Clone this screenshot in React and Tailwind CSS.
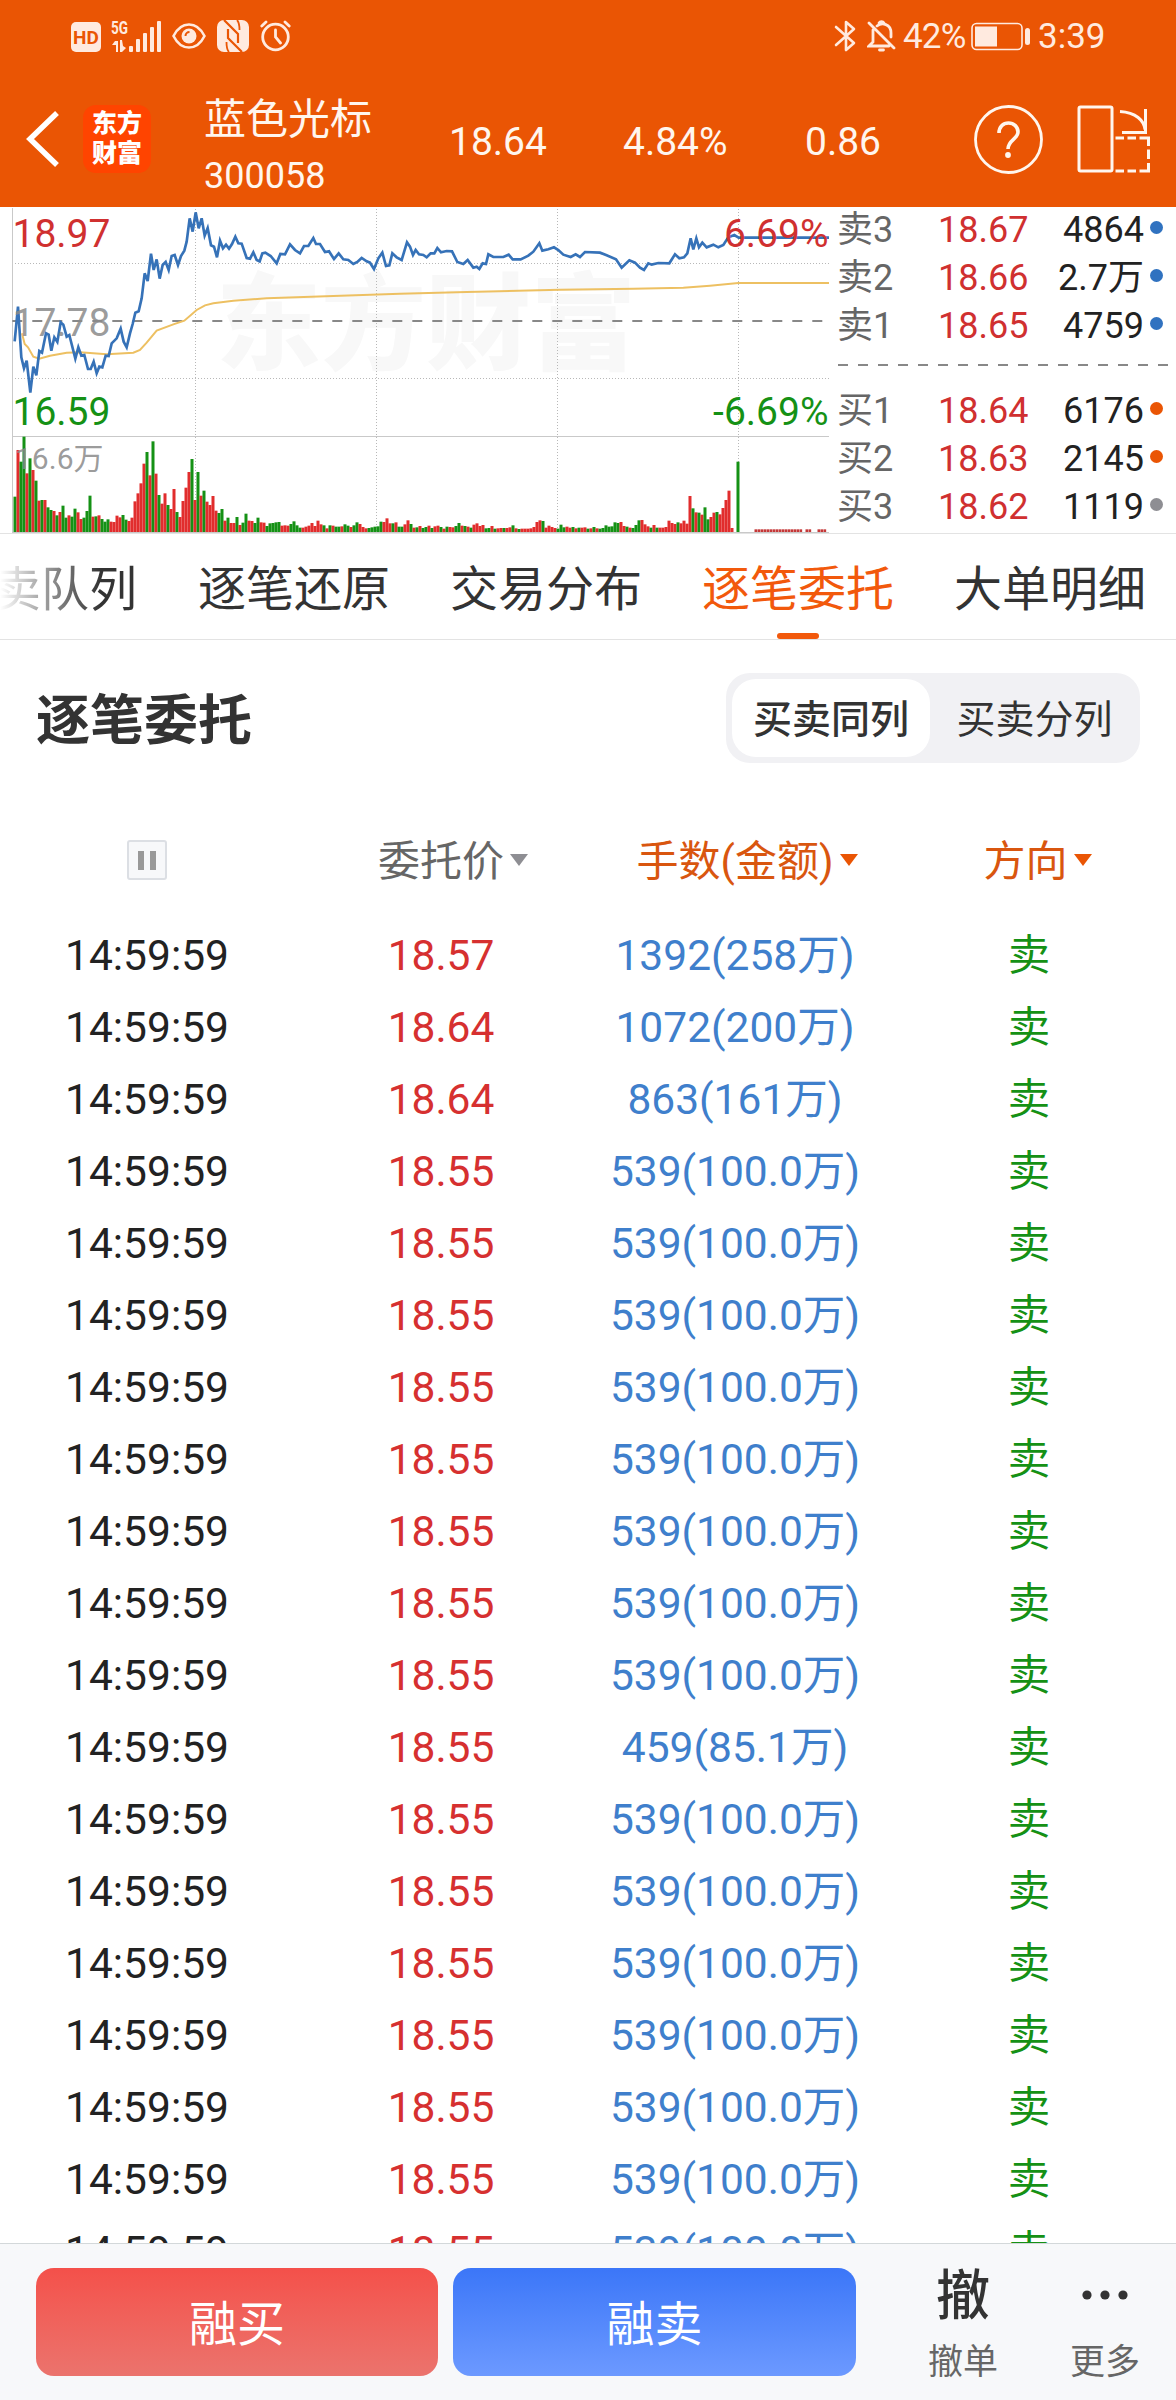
import clsx from "clsx";

const asks = [
  { label: "卖3", price: "18.67", amount: "4864", dot: "bg-[#3072c0]" },
  { label: "卖2", price: "18.66", amount: "2.7万", dot: "bg-[#3072c0]" },
  { label: "卖1", price: "18.65", amount: "4759", dot: "bg-[#3072c0]" },
];

const bids = [
  { label: "买1", price: "18.64", amount: "6176", dot: "bg-[#ea5504]" },
  { label: "买2", price: "18.63", amount: "2145", dot: "bg-[#ea5504]" },
  { label: "买3", price: "18.62", amount: "1119", dot: "bg-[#8e8e93]" },
];

const tabs = ["卖队列", "逐笔还原", "交易分布", "逐笔委托", "大单明细"];

const sell = (price, amount) => ({ time: "14:59:59", price, amount, side: "卖" });

const orders = [
  sell("18.57", "1392(258万)"),
  sell("18.64", "1072(200万)"),
  sell("18.64", "863(161万)"),
  ...Array.from({ length: 8 }, () => sell("18.55", "539(100.0万)")),
  sell("18.55", "459(85.1万)"),
  ...Array.from({ length: 7 }, () => sell("18.55", "539(100.0万)")),
];

// Chart data is in thirds of a pixel, x from the left edge of the screen
const priceLine =
  "44,424 54,320 64,472 72,505 80,482 91,578 100,500 109,526 118,453 126,458 138,400 146,404 154,452 163,412 172,426 182,367 190,374 200,410 208,405 226,476 235,442 244,467 253,465 264,507 272,507 281,485 290,520 298,500 307,502 317,467 326,468 335,430 350,415 362,386 371,425 380,442 390,400 398,372 406,338 416,334 425,295 434,220 443,243 453,161 461,210 470,178 479,236 488,195 497,186 506,210 515,168 524,165 534,195 543,168 553,152 560,125 569,55 578,95 587,37 596,85 605,55 614,107 623,84 633,136 642,140 651,172 660,122 669,145 678,134 687,146 696,132 706,110 715,130 725,131 740,174 750,176 760,157 770,180 779,184 787,160 796,158 812,168 830,190 841,162 855,163 870,133 885,150 900,160 912,138 925,138 940,114 948,132 960,132 975,156 987,154 1002,177 1016,160 1030,178 1045,180 1060,192 1072,186 1085,174 1100,184 1110,188 1122,207 1135,175 1147,158 1158,198 1168,196 1177,160 1190,172 1205,180 1221,127 1230,140 1239,165 1247,150 1257,163 1270,165 1280,172 1292,160 1303,160 1312,144 1323,157 1340,153 1356,154 1372,186 1390,192 1403,180 1420,203 1430,200 1438,207 1448,190 1458,192 1465,163 1480,171 1510,171 1526,164 1538,178 1562,178 1585,167 1600,155 1618,130 1627,152 1645,148 1662,142 1675,150 1690,164 1712,171 1727,163 1740,171 1755,156 1800,158 1820,166 1848,178 1865,203 1888,181 1905,188 1920,203 1932,210 1945,190 1955,194 1975,189 2008,190 2025,163 2038,175 2052,172 2062,160 2072,115 2080,148 2089,115 2097,142 2107,128 2120,142 2140,134 2155,142 2170,135 2185,112 2203,105 2216,113 2487,113";

const averageLine =
  "66,400 74,432 84,442 100,470 118,476 150,467 200,458 240,457 320,463 400,458 420,450 440,428 470,392 520,373 553,362 590,330 615,316 640,310 700,302 800,295 1000,288 1200,281 1400,276 1680,269 1900,266 2050,263 2130,257 2215,249 2487,249";

// Positive = red bar, negative = green bar
const volumes = [
  -106, 246, -211, -286, 176, -221, 186, -154, 94, -96, 96, -74, -66, 63, -50, 60, -79, -43, 50, -46,
  -70, 59, 39, -43, -63, -109, 46, -47, 50, -39, -31, -38, 31, 30, 49, 44, -51, -37, 33, 43,
  92, 116, 146, 205, -240, 170, -272, 175, -111, 85, 116, -81, 69, 129, -60, 45, 93, 133, 180, -219,
  96, -180, 109, -124, 91, 81, 108, 64, -57, -69, 34, -43, 27, 27, -45, 21, -28, -55, 34, 33,
  -27, -43, 29, 28, -18, -26, -27, -29, -30, 19, 20, 19, -24, -32, -20, -13, 13, 16, 19, 27,
  18, 34, 23, -20, 11, -20, 19, -16, -16, 17, -23, -19, 15, -20, -29, 24, 15, 11, -12, -14,
  -16, -17, -31, 30, 41, 26, -26, 29, -16, -16, 23, 35, -24, 13, -14, 18, -12, -15, 19, -12,
  17, 19, -15, 10, -16, 15, 14, -18, -27, 19, -18, 16, -13, 22, 26, 18, 21, -11, -12, 18,
  -10, 11, 12, -12, 12, 14, -20, 11, -9, 10, 10, 10, 11, 15, 30, 35, -33, 13, 19, 15,
  12, -10, -22, -14, 16, 13, -15, 11, -13, 13, 14, -10, 11, -15, 11, -10, -12, -20, -16, -17,
  -29, -27, 30, 18, -16, 13, -12, -21, -35, 36, 23, 17, -13, 21, -13, 13, 13, 15, 34, 27,
  24, -29, 26, 34, 25, 108, -71, 59, -58, 52, -74, -38, 45, 58, -60, 53, 72, 96, 124, 12,
  0, -211, 0, 0, 0, 0, 0, 8, 8, 8, 8, 8, 8, 8, 8, 8, 8, 8, 8, 8,
  8, 8, 8, 0, 8, 8, 0, 0, 8, 8, 8,
];

function StatusBar() {
  return (
    <div className="flex h-[72px] items-center text-[#ffeadf]">
      <div className="ml-[71px] mt-[2px] flex h-[30px] w-[30px] items-center justify-center rounded-[5px] bg-[#ffeadf] text-[19px] font-bold leading-none text-[#ea5504]">
        HD
      </div>
      <svg className="ml-[10px] overflow-visible" width="52" height="34" viewBox="0 0 52 34" fill="currentColor">
        <text x="0" y="15" fontSize="19" fontWeight="700" textLength="17" lengthAdjust="spacingAndGlyphs">5G</text>
        <path d="M4 22h3v11H5v-7H1zM9 21h2l1 6 3 2-4 4H9z" />
        <rect x="18" y="27" width="4" height="6" rx="1" />
        <rect x="25" y="20" width="4" height="13" rx="1" />
        <rect x="32" y="14" width="4" height="19" rx="1" />
        <rect x="39" y="8" width="4" height="25" rx="1" />
        <rect x="46" y="2" width="4" height="31" rx="1" />
      </svg>
      <svg className="ml-[9px]" width="34" height="26" viewBox="0 0 34 26" fill="none" stroke="currentColor" strokeWidth="2.6">
        <path d="M1.500 13C5 6 10 1.500 17 1.500S29 6 32.500 13C29 20 24 24.500 17 24.500S5 20 1.500 13Z" />
        <circle cx="17" cy="13" r="7.500" fill="currentColor" stroke="none" />
        <path d="M13.500 13a4 4 0 0 1 4-4" stroke="#ea5504" strokeWidth="2" />
      </svg>
      <svg className="ml-[11px]" width="32" height="32" viewBox="0 0 32 32">
        <rect width="32" height="32" rx="7" fill="currentColor" />
        <path d="M7 0 21 14v9M25 32 11 18V9" fill="none" stroke="#ea5504" strokeWidth="2.200" />
        <path d="M20 0c2 2 2.500 5 2.500 10M12 32c-2-2-2.500-5-2.500-10" fill="none" stroke="#ea5504" strokeWidth="1.800" />
      </svg>
      <svg className="ml-[11px]" width="32" height="32" viewBox="0 0 32 32" fill="none" stroke="currentColor" strokeWidth="2.800" strokeLinecap="round">
        <circle cx="15.500" cy="17" r="12.800" />
        <path d="M15.500 10v7l5 6M1.800 6 6 2M29.200 6 25 2" />
      </svg>

      <svg className="ml-auto" width="22" height="32" viewBox="0 0 22 32" fill="none" stroke="currentColor" strokeWidth="2.600" strokeLinejoin="round" strokeLinecap="round">
        <path d="M2 7 20 23 12 30V2l8 7L2 25" />
      </svg>
      <svg className="ml-[11px]" width="29" height="32" viewBox="0 0 29 32" fill="none" stroke="currentColor" strokeWidth="2.800" strokeLinecap="round">
        <path d="M2 3 27 28M6 10v12l-4 4h20M10 6c5-4 14-2 14 7v4" />
        <path d="M12 3a3 3 0 0 1 5 0M12.500 30h4" />
      </svg>
      <span className="ml-[7px] w-[63px] whitespace-nowrap text-[35px] leading-none tracking-[-0.8px]">42%</span>
      <svg className="ml-[5px]" width="60" height="29" viewBox="0 0 60 29">
        <rect x="1" y="1.500" width="50" height="26" rx="4.500" fill="none" stroke="currentColor" strokeWidth="1.600" />
        <rect x="4" y="4.500" width="22" height="20" fill="currentColor" />
        <rect x="54" y="6" width="5" height="17" rx="2.500" fill="currentColor" />
      </svg>
      <span className="ml-[7px] mr-[73px] w-[65px] whitespace-nowrap text-[35px] leading-none">3:39</span>
    </div>
  );
}

function TitleBar() {
  return (
    <div className="flex h-[135px] items-center pb-[1px] text-[#fff6ee]">
      <svg className="ml-[26px]" width="34" height="56" viewBox="0 0 34 56" fill="none" stroke="#fff" strokeWidth="5.500">
        <path d="M31 2 4 28l27 26" />
      </svg>
      <div className="ml-[23px] flex h-[68px] w-[68px] flex-col items-center justify-center rounded-[13px] bg-[#ff4400] text-[25px] font-black leading-[30px] text-white">
        <span>东方</span>
        <span>财富</span>
      </div>
      <div className="ml-[53px] mt-[18px] w-[242px]">
        <div className="text-[42px] leading-[57px]">蓝色光标</div>
        <div className="text-[36px] leading-[57px]">300058</div>
      </div>
      <div className="mt-[6px] flex text-[39px] leading-none">
        <span className="ml-[3px] w-[174px]">18.64</span>
        <span className="w-[182px]">4.84%</span>
        <span className="w-[169px]">0.86</span>
      </div>
      <svg width="69" height="69" viewBox="0 0 69 69" fill="none" stroke="currentColor">
        <circle cx="34.500" cy="34.500" r="33" strokeWidth="2.800" />
        <path d="M25 28c0-6 4-10 9.500-10S44 22 44 27c0 7-10 8-10 17" strokeWidth="3.600" />
        <circle cx="34" cy="50" r="2.900" fill="currentColor" stroke="none" />
      </svg>
      <svg className="ml-[34px]" width="74" height="68" viewBox="0 0 74 68" fill="none" stroke="currentColor" strokeWidth="3">
        <rect x="2" y="2" width="33" height="64" rx="1.500" />
        <path d="M43 6.500c16 1 24 9 25 18M68.500 4v23.500H45" />
        <path d="M38.500 33H47M50.500 33H59M62.500 33H71.500V41M71.500 44.500V54M71.500 58V66H62.500M59 66H50.500M47 66H38.500" />
      </svg>
    </div>
  );
}

function TrendChart() {
  return (
    <svg width="832" height="326" viewBox="0 207 832 326">
      <text x="216" y="361" fontSize="105" fontWeight="900" fill="#f8f8f8">东方财富</text>
      <g fill="none" stroke="#c9c9c9">
        <path d="M12.500 208V532M12 436.500H829M12 532.500H829" />
        <path d="M15 263.500H829M15 378.500H829M195.500 209V532M376.500 209V532M557.500 209V532M738.500 209V532" stroke="#b8b8b8" strokeDasharray="1 2" />
      </g>
      <path d="M12.300 321H823" stroke="#888" strokeWidth="2" strokeDasharray="10 10" />
      <g transform="translate(0 200) scale(0.33333)">
        {volumes.map((v, i) => (
          <rect
            key={i}
            x={40.5 + i * 9}
            y={996 - Math.abs(v)}
            width={Math.abs(v) > 8 ? 9 : 8}
            height={Math.abs(v)}
            fill={v < 0 ? "#159115" : Math.abs(v) > 8 ? "#e12d2d" : "#c43838"}
          />
        ))}
        <polyline points={averageLine} fill="none" stroke="#edc062" strokeWidth="6" />
        <polyline points={priceLine} fill="none" stroke="#3672b8" strokeWidth="8" />
      </g>
      <g fontSize="39">
        <text x="12.500" y="247" fill="#d03030">18.97</text>
        <text x="12.500" y="336" fill="#8a8a8a" fillOpacity="0.85">17.78</text>
        <text x="12.500" y="425" fill="#159115">16.59</text>
        <text x="828.500" y="247" textAnchor="end" fill="#d03030">6.69%</text>
        <text x="828.500" y="425" textAnchor="end" fill="#159115">-6.69%</text>
        <text x="15" y="469" fontSize="30" fill="#8a8a8a" fillOpacity="0.85">16.6万</text>
      </g>
    </svg>
  );
}

function QuoteRow({ label, price, amount, dot }) {
  return (
    <div className="flex h-12 items-center text-[36px] leading-none">
      <span className="w-[101px] text-[#666]">{label}</span>
      <span className="text-[#d03030]">{price}</span>
      <span className="ml-auto mr-[6px] text-[#222]">{amount}</span>
      <span className={clsx("mb-[5px] mr-[13px] h-[13px] w-[13px] rounded-full", dot)} />
    </div>
  );
}

function OrderBook() {
  return (
    <div className="-mt-px flex-1 pl-[5px]">
      {asks.map((row) => (
        <QuoteRow key={row.label} {...row} />
      ))}
      <svg className="mb-[21px] ml-px mt-[14px] block" width="332" height="2" viewBox="0 0 332 2">
        <path d="M0 1H332" stroke="#888" strokeWidth="2" strokeDasharray="10 10" />
      </svg>
      {bids.map((row) => (
        <QuoteRow key={row.label} {...row} />
      ))}
    </div>
  );
}

function Tabs() {
  return (
    <div className="flex h-[106px] gap-[60px] overflow-hidden border-b border-[#e3e3e3] text-[48px] leading-none text-[#333]">
      {tabs.map((tab, i) => (
        <div
          key={tab}
          className={clsx(
            "flex shrink-0 flex-col items-center pt-8",
            i === 0 && "-ml-[7px] mr-px bg-gradient-to-r from-white from-5% to-[#333] to-75% bg-clip-text text-transparent",
            tab === "逐笔委托" && "text-[#f2590c]"
          )}
        >
          <span>{tab}</span>
          {tab === "逐笔委托" && <span className="mt-auto h-1.5 w-[42px] rounded-full bg-[#f2590c]" />}
        </div>
      ))}
    </div>
  );
}

function SortLabel({ children, active, className }) {
  return (
    <div className={clsx("flex items-center justify-center", active ? "text-[#d9560f]" : "text-[#666]", className)}>
      <span className="pt-1">{children}</span>
      <svg
        className={clsx("-mr-[24px] ml-[6px]", active ? "text-[#ea5504]" : "text-[#8e8e93]")}
        width="18"
        height="12"
        viewBox="0 0 18 12"
        fill="currentColor"
      >
        <path d="M0 0H18L9 12Z" />
      </svg>
    </div>
  );
}

function OrderTable() {
  return (
    <div className="flex-1 overflow-hidden text-[42.5px] leading-none">
      <div className="grid h-[124px] grid-cols-4 items-center pt-1 text-[42px]">
        <div className="mx-auto flex h-10 w-10 items-center justify-center gap-[6px] rounded-[3px] border-2 border-[#dcdfe4] bg-[#f7f8fa]">
          <span className="h-[19px] w-[6px] bg-[#999]" />
          <span className="h-[19px] w-[6px] bg-[#999]" />
        </div>
        <SortLabel>委托价</SortLabel>
        <SortLabel active>手数(金额)</SortLabel>
        <SortLabel active className="pr-[7px]">方向</SortLabel>
      </div>
      {orders.map((order, i) => (
        <div key={i} className="grid h-[72px] grid-cols-4 items-center text-center">
          <span className="text-[#222]">{order.time}</span>
          <span className="text-[#d63030]">{order.price}</span>
          <span className="text-[#3f7fcc]">{order.amount}</span>
          <span className="text-[#159115]">{order.side}</span>
        </div>
      ))}
    </div>
  );
}

function BottomBar() {
  return (
    <div className="flex h-[157px] border-t border-[#d3d8da] bg-[#f7f8fa] pt-6">
      <button className="ml-9 h-[108px] w-[402px] rounded-[18px] bg-gradient-to-b from-[#f4504a] to-[#eb736d] pt-[5px] text-[48px] text-white">
        融买
      </button>
      <button className="ml-[15px] h-[108px] w-[403px] rounded-[18px] bg-gradient-to-b from-[#3b76f8] to-[#6c99ff] pt-[5px] text-[48px] text-white">
        融卖
      </button>
      <div className="ml-[36px] flex w-[142px] flex-col items-center leading-none text-[#666]">
        <span className="mt-[2px] text-[54px] font-medium text-[#333]">撤</span>
        <span className="mt-[21px] text-[35px]">撤单</span>
      </div>
      <div className="flex w-[142px] flex-col items-center leading-none text-[#666]">
        <svg className="h-[54px]" width="46" height="54" viewBox="0 0 46 54" fill="#333">
          <circle cx="5" cy="27" r="4.600" />
          <circle cx="23" cy="27" r="4.600" />
          <circle cx="41" cy="27" r="4.600" />
        </svg>
        <span className="mt-[23px] text-[35px]">更多</span>
      </div>
    </div>
  );
}

export default function App() {
  return (
    <div className="flex h-[2400px] w-[1176px] flex-col overflow-hidden bg-white font-[Roboto,'Noto_Sans_CJK_SC',sans-serif]">
      <header className="h-[207px] bg-[#ea5504]">
        <StatusBar />
        <TitleBar />
      </header>
      <section className="flex h-[327px] border-b border-[#e3e3e3]">
        <TrendChart />
        <OrderBook />
      </section>
      <Tabs />
      <div className="flex h-[156px] items-center justify-between pl-9 pr-9">
        <h1 className="pt-2 text-[54px] font-bold leading-none text-[#333]">逐笔委托</h1>
        <div className="flex h-[90px] w-[414px] items-center rounded-[24px] bg-[#f1f1f4] p-1.5 text-[39px] leading-none text-[#333]">
          <div className="flex h-full w-[198px] items-center justify-center rounded-[24px] bg-white pt-1 font-medium">买卖同列</div>
          <div className="flex-1 pl-[5px] pt-1 text-center">买卖分列</div>
        </div>
      </div>
      <OrderTable />
      <BottomBar />
    </div>
  );
}
